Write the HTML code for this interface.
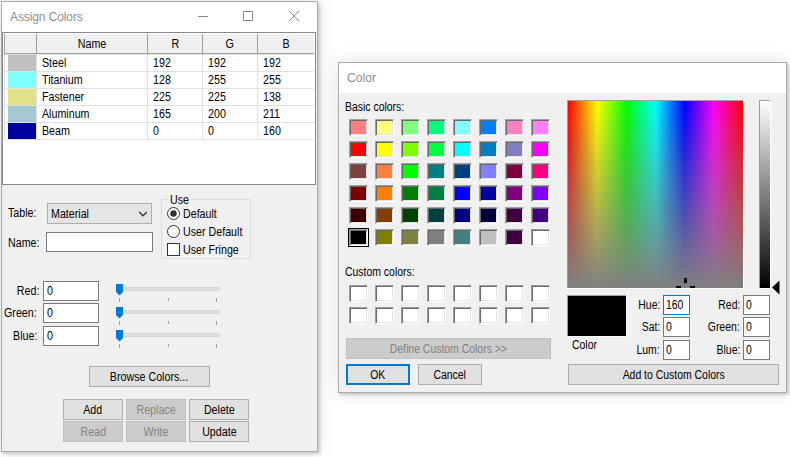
<!DOCTYPE html>
<html><head><meta charset="utf-8"><style>
html,body{margin:0;padding:0;}
body{width:790px;height:457px;overflow:hidden;position:relative;background:#ffffff;font-family:'Liberation Sans', sans-serif;}
body>div,body>span,body>svg{position:absolute;box-sizing:border-box;}
body>span{white-space:pre;}
</style></head><body>
<div style="left:1px;top:1px;width:317px;height:451px;box-shadow:2px 2px 3px rgba(0,0,0,0.18), 0 0 18px 0 rgba(0,0,0,0.12);background:#f0f0f0"></div>
<div style="left:338px;top:62px;width:449px;height:331px;box-shadow:2px 2px 3px rgba(0,0,0,0.18), 0 0 18px 0 rgba(0,0,0,0.12);background:#f0f0f0"></div>
<div style="left:1px;top:1px;width:317px;height:451px;border:1px solid #aaaaaa;background:#f0f0f0;"></div>
<div style="left:2px;top:2px;width:315px;height:30px;background:#ffffff"></div>
<span style="left:10px;top:11px;font-size:12px;line-height:12px;color:#8c8c8c;letter-spacing:-0.1px;transform:scaleX(1);transform-origin:0 0;">Assign Colors</span>
<svg style="left:0;top:0" width="790" height="457" viewBox="0 0 790 457"><g stroke="#8a8a8e" stroke-width="1" fill="none" shape-rendering="crispEdges"><line x1="198" y1="16.5" x2="208" y2="16.5"/><rect x="243.5" y="11.5" width="9" height="9"/></g><g stroke="#8a8a8e" stroke-width="1" fill="none"><line x1="289" y1="11" x2="299" y2="21"/><line x1="299" y1="11" x2="289" y2="21"/><line x1="766" y1="72" x2="776" y2="82"/><line x1="776" y1="72" x2="766" y2="82"/></g></svg>
<div style="left:2px;top:32px;width:314px;height:153px;border:1px solid #828790;background:#ffffff;"></div>
<div style="left:5px;top:34px;width:309px;height:19px;background:#f0f0f0"></div>
<div style="left:4px;top:34px;width:1px;height:20px;background:#a0a0a0"></div>
<div style="left:4px;top:53px;width:310px;height:1px;background:#a0a0a0"></div>
<div style="left:36px;top:34px;width:1px;height:19px;background:#a0a0a0"></div>
<div style="left:147px;top:34px;width:1px;height:19px;background:#a0a0a0"></div>
<div style="left:202px;top:34px;width:1px;height:19px;background:#a0a0a0"></div>
<div style="left:257px;top:34px;width:1px;height:19px;background:#a0a0a0"></div>
<div style="left:5px;top:54px;width:309px;height:1px;background:#e0e0e0"></div>
<div style="left:5px;top:71px;width:309px;height:1px;background:#e0e0e0"></div>
<div style="left:5px;top:88px;width:309px;height:1px;background:#e0e0e0"></div>
<div style="left:5px;top:105px;width:309px;height:1px;background:#e0e0e0"></div>
<div style="left:5px;top:122px;width:309px;height:1px;background:#e0e0e0"></div>
<div style="left:5px;top:139px;width:309px;height:1px;background:#e0e0e0"></div>
<div style="left:4px;top:54px;width:1px;height:86px;background:#e0e0e0"></div>
<div style="left:36px;top:54px;width:1px;height:86px;background:#e0e0e0"></div>
<div style="left:147px;top:54px;width:1px;height:86px;background:#e0e0e0"></div>
<div style="left:202px;top:54px;width:1px;height:86px;background:#e0e0e0"></div>
<div style="left:257px;top:54px;width:1px;height:86px;background:#e0e0e0"></div>
<div style="left:37px;width:110px;text-align:center;top:38px;font-size:12px;line-height:12px;white-space:pre"><span style="display:inline-block;color:#000;letter-spacing:0px;transform:scaleX(0.89);transform-origin:50% 0">Name</span></div>
<div style="left:148px;width:54px;text-align:center;top:38px;font-size:12px;line-height:12px;white-space:pre"><span style="display:inline-block;color:#000;letter-spacing:0px;transform:scaleX(0.89);transform-origin:50% 0">R</span></div>
<div style="left:203px;width:54px;text-align:center;top:38px;font-size:12px;line-height:12px;white-space:pre"><span style="display:inline-block;color:#000;letter-spacing:0px;transform:scaleX(0.89);transform-origin:50% 0">G</span></div>
<div style="left:258px;width:56px;text-align:center;top:38px;font-size:12px;line-height:12px;white-space:pre"><span style="display:inline-block;color:#000;letter-spacing:0px;transform:scaleX(0.89);transform-origin:50% 0">B</span></div>
<div style="left:8px;top:55px;width:28px;height:16px;background:#c0c0c0"></div>
<span style="left:42px;top:57px;font-size:12px;line-height:12px;color:#000;letter-spacing:0px;transform:scaleX(0.89);transform-origin:0 0;">Steel</span>
<span style="left:153px;top:57px;font-size:12px;line-height:12px;color:#000;letter-spacing:0px;transform:scaleX(0.89);transform-origin:0 0;">192</span>
<span style="left:208px;top:57px;font-size:12px;line-height:12px;color:#000;letter-spacing:0px;transform:scaleX(0.89);transform-origin:0 0;">192</span>
<span style="left:263px;top:57px;font-size:12px;line-height:12px;color:#000;letter-spacing:0px;transform:scaleX(0.89);transform-origin:0 0;">192</span>
<div style="left:8px;top:72px;width:28px;height:16px;background:#80ffff"></div>
<span style="left:42px;top:74px;font-size:12px;line-height:12px;color:#000;letter-spacing:0px;transform:scaleX(0.89);transform-origin:0 0;">Titanium</span>
<span style="left:153px;top:74px;font-size:12px;line-height:12px;color:#000;letter-spacing:0px;transform:scaleX(0.89);transform-origin:0 0;">128</span>
<span style="left:208px;top:74px;font-size:12px;line-height:12px;color:#000;letter-spacing:0px;transform:scaleX(0.89);transform-origin:0 0;">255</span>
<span style="left:263px;top:74px;font-size:12px;line-height:12px;color:#000;letter-spacing:0px;transform:scaleX(0.89);transform-origin:0 0;">255</span>
<div style="left:8px;top:89px;width:28px;height:16px;background:#e1e18a"></div>
<span style="left:42px;top:91px;font-size:12px;line-height:12px;color:#000;letter-spacing:0px;transform:scaleX(0.89);transform-origin:0 0;">Fastener</span>
<span style="left:153px;top:91px;font-size:12px;line-height:12px;color:#000;letter-spacing:0px;transform:scaleX(0.89);transform-origin:0 0;">225</span>
<span style="left:208px;top:91px;font-size:12px;line-height:12px;color:#000;letter-spacing:0px;transform:scaleX(0.89);transform-origin:0 0;">225</span>
<span style="left:263px;top:91px;font-size:12px;line-height:12px;color:#000;letter-spacing:0px;transform:scaleX(0.89);transform-origin:0 0;">138</span>
<div style="left:8px;top:106px;width:28px;height:16px;background:#a5c8d3"></div>
<span style="left:42px;top:108px;font-size:12px;line-height:12px;color:#000;letter-spacing:0px;transform:scaleX(0.89);transform-origin:0 0;">Aluminum</span>
<span style="left:153px;top:108px;font-size:12px;line-height:12px;color:#000;letter-spacing:0px;transform:scaleX(0.89);transform-origin:0 0;">165</span>
<span style="left:208px;top:108px;font-size:12px;line-height:12px;color:#000;letter-spacing:0px;transform:scaleX(0.89);transform-origin:0 0;">200</span>
<span style="left:263px;top:108px;font-size:12px;line-height:12px;color:#000;letter-spacing:0px;transform:scaleX(0.89);transform-origin:0 0;">211</span>
<div style="left:8px;top:123px;width:28px;height:16px;background:#0000a0"></div>
<span style="left:42px;top:125px;font-size:12px;line-height:12px;color:#000;letter-spacing:0px;transform:scaleX(0.89);transform-origin:0 0;">Beam</span>
<span style="left:153px;top:125px;font-size:12px;line-height:12px;color:#000;letter-spacing:0px;transform:scaleX(0.89);transform-origin:0 0;">0</span>
<span style="left:208px;top:125px;font-size:12px;line-height:12px;color:#000;letter-spacing:0px;transform:scaleX(0.89);transform-origin:0 0;">0</span>
<span style="left:263px;top:125px;font-size:12px;line-height:12px;color:#000;letter-spacing:0px;transform:scaleX(0.89);transform-origin:0 0;">160</span>
<span style="left:8px;top:207px;font-size:12px;line-height:12px;color:#000;letter-spacing:0px;transform:scaleX(0.89);transform-origin:0 0;">Table:</span>
<div style="left:47px;top:203px;width:105px;height:21px;border:1px solid #adadad;background:#e5e5e5;"></div>
<span style="left:51px;top:208px;font-size:12px;line-height:12px;color:#000;letter-spacing:0px;transform:scaleX(0.89);transform-origin:0 0;">Material</span>
<svg style="left:138px;top:210px" width="11" height="8" viewBox="0 0 11 8"><polyline points="1.2,2 5,5.8 8.8,2" fill="none" stroke="#333" stroke-width="1.3"/></svg>
<span style="left:8px;top:237px;font-size:12px;line-height:12px;color:#000;letter-spacing:0px;transform:scaleX(0.89);transform-origin:0 0;">Name:</span>
<div style="left:46px;top:232px;width:107px;height:20px;border:1px solid #7a7a7a;background:#ffffff;"></div>
<div style="left:161px;top:199px;width:90px;height:60px;border:1px solid #dcdcdc;"></div>
<div style="left:168px;top:196px;width:23px;height:6px;background:#f0f0f0"></div>
<span style="left:170px;top:194px;font-size:12px;line-height:12px;color:#000;letter-spacing:0px;transform:scaleX(0.89);transform-origin:0 0;">Use</span>
<svg style="left:166px;top:206px" width="15" height="52" viewBox="0 0 15 52"><circle cx="7.5" cy="7.5" r="6" fill="#fff" stroke="#333" stroke-width="1"/><circle cx="7.5" cy="7.5" r="3.2" fill="#333"/><circle cx="7.5" cy="25.5" r="6" fill="#fff" stroke="#333" stroke-width="1"/><rect x="1.5" y="37.5" width="12" height="12" fill="#fff" stroke="#333" stroke-width="1"/></svg>
<span style="left:183px;top:208px;font-size:12px;line-height:12px;color:#000;letter-spacing:0px;transform:scaleX(0.89);transform-origin:0 0;">Default</span>
<span style="left:183px;top:226px;font-size:12px;line-height:12px;color:#000;letter-spacing:0px;transform:scaleX(0.89);transform-origin:0 0;">User Default</span>
<span style="left:183px;top:244px;font-size:12px;line-height:12px;color:#000;letter-spacing:0px;transform:scaleX(0.89);transform-origin:0 0;">User Fringe</span>
<div style="left:0;width:39px;text-align:right;top:285px;font-size:12px;line-height:12px;white-space:pre"><span style="display:inline-block;color:#000;letter-spacing:0px;transform:scaleX(0.89);transform-origin:100% 0">Red:</span></div>
<div style="left:43px;top:281px;width:56px;height:20px;border:1px solid #7a7a7a;background:#ffffff;"></div>
<span style="left:47px;top:285px;font-size:12px;line-height:12px;color:#000;letter-spacing:0px;transform:scaleX(0.89);transform-origin:0 0;">0</span>
<div style="left:116px;top:287px;width:104px;height:4px;border:1px solid #d6d6d6;background:#dedede;"></div>
<div style="left:119px;top:298px;width:1px;height:4px;background:#a0a0a0"></div>
<div style="left:168px;top:298px;width:1px;height:3px;background:#a0a0a0"></div>
<div style="left:216px;top:298px;width:1px;height:4px;background:#a0a0a0"></div>
<svg style="left:116px;top:284px" width="7" height="12" viewBox="0 0 7 12"><polygon points="0,0 7,0 7,8 3.5,11.5 0,8" fill="#0078d7"/></svg>
<div style="left:0;width:37px;text-align:right;top:307px;font-size:12px;line-height:12px;white-space:pre"><span style="display:inline-block;color:#000;letter-spacing:0px;transform:scaleX(0.89);transform-origin:100% 0">Green:</span></div>
<div style="left:43px;top:303px;width:56px;height:20px;border:1px solid #7a7a7a;background:#ffffff;"></div>
<span style="left:47px;top:307px;font-size:12px;line-height:12px;color:#000;letter-spacing:0px;transform:scaleX(0.89);transform-origin:0 0;">0</span>
<div style="left:116px;top:310px;width:104px;height:4px;border:1px solid #d6d6d6;background:#dedede;"></div>
<div style="left:119px;top:321px;width:1px;height:4px;background:#a0a0a0"></div>
<div style="left:168px;top:321px;width:1px;height:3px;background:#a0a0a0"></div>
<div style="left:216px;top:321px;width:1px;height:4px;background:#a0a0a0"></div>
<svg style="left:116px;top:307px" width="7" height="12" viewBox="0 0 7 12"><polygon points="0,0 7,0 7,8 3.5,11.5 0,8" fill="#0078d7"/></svg>
<div style="left:0;width:37px;text-align:right;top:330px;font-size:12px;line-height:12px;white-space:pre"><span style="display:inline-block;color:#000;letter-spacing:0px;transform:scaleX(0.89);transform-origin:100% 0">Blue:</span></div>
<div style="left:43px;top:326px;width:56px;height:20px;border:1px solid #7a7a7a;background:#ffffff;"></div>
<span style="left:47px;top:330px;font-size:12px;line-height:12px;color:#000;letter-spacing:0px;transform:scaleX(0.89);transform-origin:0 0;">0</span>
<div style="left:116px;top:333px;width:104px;height:4px;border:1px solid #d6d6d6;background:#dedede;"></div>
<div style="left:119px;top:344px;width:1px;height:4px;background:#a0a0a0"></div>
<div style="left:168px;top:344px;width:1px;height:3px;background:#a0a0a0"></div>
<div style="left:216px;top:344px;width:1px;height:4px;background:#a0a0a0"></div>
<svg style="left:116px;top:330px" width="7" height="12" viewBox="0 0 7 12"><polygon points="0,0 7,0 7,8 3.5,11.5 0,8" fill="#0078d7"/></svg>
<div style="left:89px;top:366px;width:121px;height:21px;border:1px solid #adadad;background:#e1e1e1;"></div>
<div style="left:89px;width:121px;text-align:center;top:371px;font-size:12px;line-height:12px;white-space:pre"><span style="display:inline-block;color:#000;letter-spacing:0px;transform:scaleX(0.89);transform-origin:50% 0">Browse Colors...</span></div>
<div style="left:63px;top:399px;width:60px;height:21px;border:1px solid #adadad;background:#e1e1e1;"></div>
<div style="left:63px;width:60px;text-align:center;top:404px;font-size:12px;line-height:12px;white-space:pre"><span style="display:inline-block;color:#000;letter-spacing:0px;transform:scaleX(0.89);transform-origin:50% 0">Add</span></div>
<div style="left:126px;top:399px;width:60px;height:21px;border:1px solid #bfbfbf;background:#cccccc;"></div>
<div style="left:126px;width:60px;text-align:center;top:404px;font-size:12px;line-height:12px;white-space:pre"><span style="display:inline-block;color:#838383;letter-spacing:0px;transform:scaleX(0.89);transform-origin:50% 0">Replace</span></div>
<div style="left:189px;top:399px;width:60px;height:21px;border:1px solid #adadad;background:#e1e1e1;"></div>
<div style="left:189px;width:60px;text-align:center;top:404px;font-size:12px;line-height:12px;white-space:pre"><span style="display:inline-block;color:#000;letter-spacing:0px;transform:scaleX(0.89);transform-origin:50% 0">Delete</span></div>
<div style="left:63px;top:421px;width:60px;height:21px;border:1px solid #bfbfbf;background:#cccccc;"></div>
<div style="left:63px;width:60px;text-align:center;top:426px;font-size:12px;line-height:12px;white-space:pre"><span style="display:inline-block;color:#838383;letter-spacing:0px;transform:scaleX(0.89);transform-origin:50% 0">Read</span></div>
<div style="left:126px;top:421px;width:60px;height:21px;border:1px solid #bfbfbf;background:#cccccc;"></div>
<div style="left:126px;width:60px;text-align:center;top:426px;font-size:12px;line-height:12px;white-space:pre"><span style="display:inline-block;color:#838383;letter-spacing:0px;transform:scaleX(0.89);transform-origin:50% 0">Write</span></div>
<div style="left:189px;top:421px;width:60px;height:21px;border:1px solid #adadad;background:#e1e1e1;"></div>
<div style="left:189px;width:60px;text-align:center;top:426px;font-size:12px;line-height:12px;white-space:pre"><span style="display:inline-block;color:#000;letter-spacing:0px;transform:scaleX(0.89);transform-origin:50% 0">Update</span></div>
<div style="left:338px;top:62px;width:449px;height:331px;border:1px solid #aaaaaa;background:#f0f0f0;"></div>
<div style="left:339px;top:63px;width:447px;height:30px;background:#ffffff"></div>
<span style="left:347px;top:72px;font-size:12px;line-height:12px;color:#8c8c8c;letter-spacing:0.1px;transform:scaleX(1);transform-origin:0 0;">Color</span>
<span style="left:345px;top:101px;font-size:12px;line-height:12px;color:#000;letter-spacing:0px;transform:scaleX(0.87);transform-origin:0 0;">Basic colors:</span>
<div style="left:349px;top:119px;width:19px;height:17px;background:#FF8080;border-style:solid;border-width:1px;border-color:#a0a0a0 #ffffff #ffffff #a0a0a0;box-shadow:inset 1px 1px 0 #696969, inset -1px -1px 0 #e3e3e3"></div>
<div style="left:375px;top:119px;width:19px;height:17px;background:#FFFF80;border-style:solid;border-width:1px;border-color:#a0a0a0 #ffffff #ffffff #a0a0a0;box-shadow:inset 1px 1px 0 #696969, inset -1px -1px 0 #e3e3e3"></div>
<div style="left:401px;top:119px;width:19px;height:17px;background:#80FF80;border-style:solid;border-width:1px;border-color:#a0a0a0 #ffffff #ffffff #a0a0a0;box-shadow:inset 1px 1px 0 #696969, inset -1px -1px 0 #e3e3e3"></div>
<div style="left:427px;top:119px;width:19px;height:17px;background:#00FF80;border-style:solid;border-width:1px;border-color:#a0a0a0 #ffffff #ffffff #a0a0a0;box-shadow:inset 1px 1px 0 #696969, inset -1px -1px 0 #e3e3e3"></div>
<div style="left:453px;top:119px;width:19px;height:17px;background:#80FFFF;border-style:solid;border-width:1px;border-color:#a0a0a0 #ffffff #ffffff #a0a0a0;box-shadow:inset 1px 1px 0 #696969, inset -1px -1px 0 #e3e3e3"></div>
<div style="left:479px;top:119px;width:19px;height:17px;background:#0080FF;border-style:solid;border-width:1px;border-color:#a0a0a0 #ffffff #ffffff #a0a0a0;box-shadow:inset 1px 1px 0 #696969, inset -1px -1px 0 #e3e3e3"></div>
<div style="left:505px;top:119px;width:19px;height:17px;background:#FF80C0;border-style:solid;border-width:1px;border-color:#a0a0a0 #ffffff #ffffff #a0a0a0;box-shadow:inset 1px 1px 0 #696969, inset -1px -1px 0 #e3e3e3"></div>
<div style="left:531px;top:119px;width:19px;height:17px;background:#FF80FF;border-style:solid;border-width:1px;border-color:#a0a0a0 #ffffff #ffffff #a0a0a0;box-shadow:inset 1px 1px 0 #696969, inset -1px -1px 0 #e3e3e3"></div>
<div style="left:349px;top:141px;width:19px;height:17px;background:#FF0000;border-style:solid;border-width:1px;border-color:#a0a0a0 #ffffff #ffffff #a0a0a0;box-shadow:inset 1px 1px 0 #696969, inset -1px -1px 0 #e3e3e3"></div>
<div style="left:375px;top:141px;width:19px;height:17px;background:#FFFF00;border-style:solid;border-width:1px;border-color:#a0a0a0 #ffffff #ffffff #a0a0a0;box-shadow:inset 1px 1px 0 #696969, inset -1px -1px 0 #e3e3e3"></div>
<div style="left:401px;top:141px;width:19px;height:17px;background:#80FF00;border-style:solid;border-width:1px;border-color:#a0a0a0 #ffffff #ffffff #a0a0a0;box-shadow:inset 1px 1px 0 #696969, inset -1px -1px 0 #e3e3e3"></div>
<div style="left:427px;top:141px;width:19px;height:17px;background:#00FF40;border-style:solid;border-width:1px;border-color:#a0a0a0 #ffffff #ffffff #a0a0a0;box-shadow:inset 1px 1px 0 #696969, inset -1px -1px 0 #e3e3e3"></div>
<div style="left:453px;top:141px;width:19px;height:17px;background:#00FFFF;border-style:solid;border-width:1px;border-color:#a0a0a0 #ffffff #ffffff #a0a0a0;box-shadow:inset 1px 1px 0 #696969, inset -1px -1px 0 #e3e3e3"></div>
<div style="left:479px;top:141px;width:19px;height:17px;background:#0080C0;border-style:solid;border-width:1px;border-color:#a0a0a0 #ffffff #ffffff #a0a0a0;box-shadow:inset 1px 1px 0 #696969, inset -1px -1px 0 #e3e3e3"></div>
<div style="left:505px;top:141px;width:19px;height:17px;background:#8080C0;border-style:solid;border-width:1px;border-color:#a0a0a0 #ffffff #ffffff #a0a0a0;box-shadow:inset 1px 1px 0 #696969, inset -1px -1px 0 #e3e3e3"></div>
<div style="left:531px;top:141px;width:19px;height:17px;background:#FF00FF;border-style:solid;border-width:1px;border-color:#a0a0a0 #ffffff #ffffff #a0a0a0;box-shadow:inset 1px 1px 0 #696969, inset -1px -1px 0 #e3e3e3"></div>
<div style="left:349px;top:163px;width:19px;height:17px;background:#804040;border-style:solid;border-width:1px;border-color:#a0a0a0 #ffffff #ffffff #a0a0a0;box-shadow:inset 1px 1px 0 #696969, inset -1px -1px 0 #e3e3e3"></div>
<div style="left:375px;top:163px;width:19px;height:17px;background:#FF8040;border-style:solid;border-width:1px;border-color:#a0a0a0 #ffffff #ffffff #a0a0a0;box-shadow:inset 1px 1px 0 #696969, inset -1px -1px 0 #e3e3e3"></div>
<div style="left:401px;top:163px;width:19px;height:17px;background:#00FF00;border-style:solid;border-width:1px;border-color:#a0a0a0 #ffffff #ffffff #a0a0a0;box-shadow:inset 1px 1px 0 #696969, inset -1px -1px 0 #e3e3e3"></div>
<div style="left:427px;top:163px;width:19px;height:17px;background:#008080;border-style:solid;border-width:1px;border-color:#a0a0a0 #ffffff #ffffff #a0a0a0;box-shadow:inset 1px 1px 0 #696969, inset -1px -1px 0 #e3e3e3"></div>
<div style="left:453px;top:163px;width:19px;height:17px;background:#004080;border-style:solid;border-width:1px;border-color:#a0a0a0 #ffffff #ffffff #a0a0a0;box-shadow:inset 1px 1px 0 #696969, inset -1px -1px 0 #e3e3e3"></div>
<div style="left:479px;top:163px;width:19px;height:17px;background:#8080FF;border-style:solid;border-width:1px;border-color:#a0a0a0 #ffffff #ffffff #a0a0a0;box-shadow:inset 1px 1px 0 #696969, inset -1px -1px 0 #e3e3e3"></div>
<div style="left:505px;top:163px;width:19px;height:17px;background:#800040;border-style:solid;border-width:1px;border-color:#a0a0a0 #ffffff #ffffff #a0a0a0;box-shadow:inset 1px 1px 0 #696969, inset -1px -1px 0 #e3e3e3"></div>
<div style="left:531px;top:163px;width:19px;height:17px;background:#FF0080;border-style:solid;border-width:1px;border-color:#a0a0a0 #ffffff #ffffff #a0a0a0;box-shadow:inset 1px 1px 0 #696969, inset -1px -1px 0 #e3e3e3"></div>
<div style="left:349px;top:185px;width:19px;height:17px;background:#800000;border-style:solid;border-width:1px;border-color:#a0a0a0 #ffffff #ffffff #a0a0a0;box-shadow:inset 1px 1px 0 #696969, inset -1px -1px 0 #e3e3e3"></div>
<div style="left:375px;top:185px;width:19px;height:17px;background:#FF8000;border-style:solid;border-width:1px;border-color:#a0a0a0 #ffffff #ffffff #a0a0a0;box-shadow:inset 1px 1px 0 #696969, inset -1px -1px 0 #e3e3e3"></div>
<div style="left:401px;top:185px;width:19px;height:17px;background:#008000;border-style:solid;border-width:1px;border-color:#a0a0a0 #ffffff #ffffff #a0a0a0;box-shadow:inset 1px 1px 0 #696969, inset -1px -1px 0 #e3e3e3"></div>
<div style="left:427px;top:185px;width:19px;height:17px;background:#008040;border-style:solid;border-width:1px;border-color:#a0a0a0 #ffffff #ffffff #a0a0a0;box-shadow:inset 1px 1px 0 #696969, inset -1px -1px 0 #e3e3e3"></div>
<div style="left:453px;top:185px;width:19px;height:17px;background:#0000FF;border-style:solid;border-width:1px;border-color:#a0a0a0 #ffffff #ffffff #a0a0a0;box-shadow:inset 1px 1px 0 #696969, inset -1px -1px 0 #e3e3e3"></div>
<div style="left:479px;top:185px;width:19px;height:17px;background:#0000A0;border-style:solid;border-width:1px;border-color:#a0a0a0 #ffffff #ffffff #a0a0a0;box-shadow:inset 1px 1px 0 #696969, inset -1px -1px 0 #e3e3e3"></div>
<div style="left:505px;top:185px;width:19px;height:17px;background:#800080;border-style:solid;border-width:1px;border-color:#a0a0a0 #ffffff #ffffff #a0a0a0;box-shadow:inset 1px 1px 0 #696969, inset -1px -1px 0 #e3e3e3"></div>
<div style="left:531px;top:185px;width:19px;height:17px;background:#8000FF;border-style:solid;border-width:1px;border-color:#a0a0a0 #ffffff #ffffff #a0a0a0;box-shadow:inset 1px 1px 0 #696969, inset -1px -1px 0 #e3e3e3"></div>
<div style="left:349px;top:207px;width:19px;height:17px;background:#400000;border-style:solid;border-width:1px;border-color:#a0a0a0 #ffffff #ffffff #a0a0a0;box-shadow:inset 1px 1px 0 #696969, inset -1px -1px 0 #e3e3e3"></div>
<div style="left:375px;top:207px;width:19px;height:17px;background:#804000;border-style:solid;border-width:1px;border-color:#a0a0a0 #ffffff #ffffff #a0a0a0;box-shadow:inset 1px 1px 0 #696969, inset -1px -1px 0 #e3e3e3"></div>
<div style="left:401px;top:207px;width:19px;height:17px;background:#004000;border-style:solid;border-width:1px;border-color:#a0a0a0 #ffffff #ffffff #a0a0a0;box-shadow:inset 1px 1px 0 #696969, inset -1px -1px 0 #e3e3e3"></div>
<div style="left:427px;top:207px;width:19px;height:17px;background:#004040;border-style:solid;border-width:1px;border-color:#a0a0a0 #ffffff #ffffff #a0a0a0;box-shadow:inset 1px 1px 0 #696969, inset -1px -1px 0 #e3e3e3"></div>
<div style="left:453px;top:207px;width:19px;height:17px;background:#000080;border-style:solid;border-width:1px;border-color:#a0a0a0 #ffffff #ffffff #a0a0a0;box-shadow:inset 1px 1px 0 #696969, inset -1px -1px 0 #e3e3e3"></div>
<div style="left:479px;top:207px;width:19px;height:17px;background:#000040;border-style:solid;border-width:1px;border-color:#a0a0a0 #ffffff #ffffff #a0a0a0;box-shadow:inset 1px 1px 0 #696969, inset -1px -1px 0 #e3e3e3"></div>
<div style="left:505px;top:207px;width:19px;height:17px;background:#400040;border-style:solid;border-width:1px;border-color:#a0a0a0 #ffffff #ffffff #a0a0a0;box-shadow:inset 1px 1px 0 #696969, inset -1px -1px 0 #e3e3e3"></div>
<div style="left:531px;top:207px;width:19px;height:17px;background:#400080;border-style:solid;border-width:1px;border-color:#a0a0a0 #ffffff #ffffff #a0a0a0;box-shadow:inset 1px 1px 0 #696969, inset -1px -1px 0 #e3e3e3"></div>
<div style="left:349px;top:229px;width:19px;height:17px;background:#000000;border-style:solid;border-width:1px;border-color:#a0a0a0 #ffffff #ffffff #a0a0a0;box-shadow:inset 1px 1px 0 #696969, inset -1px -1px 0 #e3e3e3"></div>
<div style="left:375px;top:229px;width:19px;height:17px;background:#808000;border-style:solid;border-width:1px;border-color:#a0a0a0 #ffffff #ffffff #a0a0a0;box-shadow:inset 1px 1px 0 #696969, inset -1px -1px 0 #e3e3e3"></div>
<div style="left:401px;top:229px;width:19px;height:17px;background:#808040;border-style:solid;border-width:1px;border-color:#a0a0a0 #ffffff #ffffff #a0a0a0;box-shadow:inset 1px 1px 0 #696969, inset -1px -1px 0 #e3e3e3"></div>
<div style="left:427px;top:229px;width:19px;height:17px;background:#808080;border-style:solid;border-width:1px;border-color:#a0a0a0 #ffffff #ffffff #a0a0a0;box-shadow:inset 1px 1px 0 #696969, inset -1px -1px 0 #e3e3e3"></div>
<div style="left:453px;top:229px;width:19px;height:17px;background:#408080;border-style:solid;border-width:1px;border-color:#a0a0a0 #ffffff #ffffff #a0a0a0;box-shadow:inset 1px 1px 0 #696969, inset -1px -1px 0 #e3e3e3"></div>
<div style="left:479px;top:229px;width:19px;height:17px;background:#C0C0C0;border-style:solid;border-width:1px;border-color:#a0a0a0 #ffffff #ffffff #a0a0a0;box-shadow:inset 1px 1px 0 #696969, inset -1px -1px 0 #e3e3e3"></div>
<div style="left:505px;top:229px;width:19px;height:17px;background:#400040;border-style:solid;border-width:1px;border-color:#a0a0a0 #ffffff #ffffff #a0a0a0;box-shadow:inset 1px 1px 0 #696969, inset -1px -1px 0 #e3e3e3"></div>
<div style="left:531px;top:229px;width:19px;height:17px;background:#FFFFFF;border-style:solid;border-width:1px;border-color:#a0a0a0 #ffffff #ffffff #a0a0a0;box-shadow:inset 1px 1px 0 #696969, inset -1px -1px 0 #e3e3e3"></div>
<div style="left:348px;top:228px;width:21px;height:19px;border:1px solid #000000;"></div>
<span style="left:345px;top:266px;font-size:12px;line-height:12px;color:#000;letter-spacing:0px;transform:scaleX(0.87);transform-origin:0 0;">Custom colors:</span>
<div style="left:349px;top:285px;width:19px;height:17px;background:#ffffff;border-style:solid;border-width:1px;border-color:#a0a0a0 #ffffff #ffffff #a0a0a0;box-shadow:inset 1px 1px 0 #696969, inset -1px -1px 0 #e3e3e3"></div>
<div style="left:375px;top:285px;width:19px;height:17px;background:#ffffff;border-style:solid;border-width:1px;border-color:#a0a0a0 #ffffff #ffffff #a0a0a0;box-shadow:inset 1px 1px 0 #696969, inset -1px -1px 0 #e3e3e3"></div>
<div style="left:401px;top:285px;width:19px;height:17px;background:#ffffff;border-style:solid;border-width:1px;border-color:#a0a0a0 #ffffff #ffffff #a0a0a0;box-shadow:inset 1px 1px 0 #696969, inset -1px -1px 0 #e3e3e3"></div>
<div style="left:427px;top:285px;width:19px;height:17px;background:#ffffff;border-style:solid;border-width:1px;border-color:#a0a0a0 #ffffff #ffffff #a0a0a0;box-shadow:inset 1px 1px 0 #696969, inset -1px -1px 0 #e3e3e3"></div>
<div style="left:453px;top:285px;width:19px;height:17px;background:#ffffff;border-style:solid;border-width:1px;border-color:#a0a0a0 #ffffff #ffffff #a0a0a0;box-shadow:inset 1px 1px 0 #696969, inset -1px -1px 0 #e3e3e3"></div>
<div style="left:479px;top:285px;width:19px;height:17px;background:#ffffff;border-style:solid;border-width:1px;border-color:#a0a0a0 #ffffff #ffffff #a0a0a0;box-shadow:inset 1px 1px 0 #696969, inset -1px -1px 0 #e3e3e3"></div>
<div style="left:505px;top:285px;width:19px;height:17px;background:#ffffff;border-style:solid;border-width:1px;border-color:#a0a0a0 #ffffff #ffffff #a0a0a0;box-shadow:inset 1px 1px 0 #696969, inset -1px -1px 0 #e3e3e3"></div>
<div style="left:531px;top:285px;width:19px;height:17px;background:#ffffff;border-style:solid;border-width:1px;border-color:#a0a0a0 #ffffff #ffffff #a0a0a0;box-shadow:inset 1px 1px 0 #696969, inset -1px -1px 0 #e3e3e3"></div>
<div style="left:349px;top:307px;width:19px;height:17px;background:#ffffff;border-style:solid;border-width:1px;border-color:#a0a0a0 #ffffff #ffffff #a0a0a0;box-shadow:inset 1px 1px 0 #696969, inset -1px -1px 0 #e3e3e3"></div>
<div style="left:375px;top:307px;width:19px;height:17px;background:#ffffff;border-style:solid;border-width:1px;border-color:#a0a0a0 #ffffff #ffffff #a0a0a0;box-shadow:inset 1px 1px 0 #696969, inset -1px -1px 0 #e3e3e3"></div>
<div style="left:401px;top:307px;width:19px;height:17px;background:#ffffff;border-style:solid;border-width:1px;border-color:#a0a0a0 #ffffff #ffffff #a0a0a0;box-shadow:inset 1px 1px 0 #696969, inset -1px -1px 0 #e3e3e3"></div>
<div style="left:427px;top:307px;width:19px;height:17px;background:#ffffff;border-style:solid;border-width:1px;border-color:#a0a0a0 #ffffff #ffffff #a0a0a0;box-shadow:inset 1px 1px 0 #696969, inset -1px -1px 0 #e3e3e3"></div>
<div style="left:453px;top:307px;width:19px;height:17px;background:#ffffff;border-style:solid;border-width:1px;border-color:#a0a0a0 #ffffff #ffffff #a0a0a0;box-shadow:inset 1px 1px 0 #696969, inset -1px -1px 0 #e3e3e3"></div>
<div style="left:479px;top:307px;width:19px;height:17px;background:#ffffff;border-style:solid;border-width:1px;border-color:#a0a0a0 #ffffff #ffffff #a0a0a0;box-shadow:inset 1px 1px 0 #696969, inset -1px -1px 0 #e3e3e3"></div>
<div style="left:505px;top:307px;width:19px;height:17px;background:#ffffff;border-style:solid;border-width:1px;border-color:#a0a0a0 #ffffff #ffffff #a0a0a0;box-shadow:inset 1px 1px 0 #696969, inset -1px -1px 0 #e3e3e3"></div>
<div style="left:531px;top:307px;width:19px;height:17px;background:#ffffff;border-style:solid;border-width:1px;border-color:#a0a0a0 #ffffff #ffffff #a0a0a0;box-shadow:inset 1px 1px 0 #696969, inset -1px -1px 0 #e3e3e3"></div>
<div style="left:346px;top:338px;width:205px;height:21px;border:1px solid #bfbfbf;background:#cccccc;"></div>
<div style="left:346px;width:205px;text-align:center;top:343px;font-size:12px;line-height:12px;white-space:pre"><span style="display:inline-block;color:#808080;letter-spacing:0px;transform:scaleX(0.87);transform-origin:50% 0">Define Custom Colors &gt;&gt;</span></div>
<div style="left:346px;top:364px;width:64px;height:21px;border:2px solid #0078d7;background:#e1e1e1"></div>
<div style="left:346px;width:64px;text-align:center;top:369px;font-size:12px;line-height:12px;white-space:pre"><span style="display:inline-block;color:#000;letter-spacing:0px;transform:scaleX(0.87);transform-origin:50% 0">OK</span></div>
<div style="left:418px;top:364px;width:64px;height:21px;border:1px solid #adadad;background:#e1e1e1;"></div>
<div style="left:418px;width:64px;text-align:center;top:369px;font-size:12px;line-height:12px;white-space:pre"><span style="display:inline-block;color:#000;letter-spacing:0px;transform:scaleX(0.87);transform-origin:50% 0">Cancel</span></div>
<div style="left:567px;top:100px;width:177px;height:189px;background:#ffffff"></div>
<div style="left:567px;top:100px;width:176px;height:1px;background:#a0a0a0"></div>
<div style="left:567px;top:100px;width:1px;height:188px;background:#a0a0a0"></div>
<div style="left:568px;top:101px;width:175px;height:187px;background:linear-gradient(to bottom, rgba(128,128,128,0) 0%, rgba(128,128,128,1) 100%), linear-gradient(to right,#ff0000 0%,#ffff00 16.67%,#00ff00 33.33%,#00ffff 50%,#0000ff 66.67%,#ff00ff 83.33%,#ff0000 100%)"></div>
<div style="left:684px;top:278px;width:3px;height:5px;background:#000"></div>
<div style="left:676px;top:286px;width:5px;height:2px;background:#000"></div>
<div style="left:690px;top:286px;width:5px;height:2px;background:#000"></div>
<div style="left:759px;top:100px;width:12px;height:189px;background:#ffffff"></div>
<div style="left:759px;top:100px;width:11px;height:1px;background:#a0a0a0"></div>
<div style="left:759px;top:100px;width:1px;height:188px;background:#a0a0a0"></div>
<div style="left:760px;top:101px;width:10px;height:187px;background:linear-gradient(to bottom,#ffffff,#000000)"></div>
<svg style="left:770px;top:279px" width="12" height="17" viewBox="0 0 12 17"><polygon points="2,8.5 9.5,1.5 9.5,15.5" fill="#000"/></svg>
<div style="left:567px;top:295px;width:60px;height:42px;background:#ffffff"></div>
<div style="left:567px;top:295px;width:59px;height:1px;background:#a0a0a0"></div>
<div style="left:567px;top:295px;width:1px;height:41px;background:#a0a0a0"></div>
<div style="left:568px;top:296px;width:58px;height:40px;background:#000000"></div>
<span style="left:572px;top:339px;font-size:12px;line-height:12px;color:#000;letter-spacing:0px;transform:scaleX(0.87);transform-origin:0 0;">Color</span>
<div style="left:0;width:660px;text-align:right;top:299px;font-size:12px;line-height:12px;white-space:pre"><span style="display:inline-block;color:#000;letter-spacing:0px;transform:scaleX(0.87);transform-origin:100% 0">Hue:</span></div>
<div style="left:663px;top:295px;width:27px;height:20px;border:1px solid #0078d7;background:#ffffff;"></div>
<span style="left:666px;top:299px;font-size:12px;line-height:12px;color:#000;letter-spacing:0px;transform:scaleX(0.87);transform-origin:0 0;">160</span>
<div style="left:0;width:740px;text-align:right;top:299px;font-size:12px;line-height:12px;white-space:pre"><span style="display:inline-block;color:#000;letter-spacing:0px;transform:scaleX(0.87);transform-origin:100% 0">Red:</span></div>
<div style="left:743px;top:295px;width:27px;height:20px;border:1px solid #7a7a7a;background:#ffffff;"></div>
<span style="left:746px;top:299px;font-size:12px;line-height:12px;color:#000;letter-spacing:0px;transform:scaleX(0.87);transform-origin:0 0;">0</span>
<div style="left:0;width:660px;text-align:right;top:321px;font-size:12px;line-height:12px;white-space:pre"><span style="display:inline-block;color:#000;letter-spacing:0px;transform:scaleX(0.87);transform-origin:100% 0">Sat:</span></div>
<div style="left:663px;top:317px;width:27px;height:20px;border:1px solid #7a7a7a;background:#ffffff;"></div>
<span style="left:666px;top:321px;font-size:12px;line-height:12px;color:#000;letter-spacing:0px;transform:scaleX(0.87);transform-origin:0 0;">0</span>
<div style="left:0;width:740px;text-align:right;top:321px;font-size:12px;line-height:12px;white-space:pre"><span style="display:inline-block;color:#000;letter-spacing:0px;transform:scaleX(0.87);transform-origin:100% 0">Green:</span></div>
<div style="left:743px;top:317px;width:27px;height:20px;border:1px solid #7a7a7a;background:#ffffff;"></div>
<span style="left:746px;top:321px;font-size:12px;line-height:12px;color:#000;letter-spacing:0px;transform:scaleX(0.87);transform-origin:0 0;">0</span>
<div style="left:0;width:660px;text-align:right;top:344px;font-size:12px;line-height:12px;white-space:pre"><span style="display:inline-block;color:#000;letter-spacing:0px;transform:scaleX(0.87);transform-origin:100% 0">Lum:</span></div>
<div style="left:663px;top:340px;width:27px;height:20px;border:1px solid #7a7a7a;background:#ffffff;"></div>
<span style="left:666px;top:344px;font-size:12px;line-height:12px;color:#000;letter-spacing:0px;transform:scaleX(0.87);transform-origin:0 0;">0</span>
<div style="left:0;width:740px;text-align:right;top:344px;font-size:12px;line-height:12px;white-space:pre"><span style="display:inline-block;color:#000;letter-spacing:0px;transform:scaleX(0.87);transform-origin:100% 0">Blue:</span></div>
<div style="left:743px;top:340px;width:27px;height:20px;border:1px solid #7a7a7a;background:#ffffff;"></div>
<span style="left:746px;top:344px;font-size:12px;line-height:12px;color:#000;letter-spacing:0px;transform:scaleX(0.87);transform-origin:0 0;">0</span>
<div style="left:568px;top:364px;width:211px;height:21px;border:1px solid #adadad;background:#e1e1e1;"></div>
<div style="left:568px;width:211px;text-align:center;top:369px;font-size:12px;line-height:12px;white-space:pre"><span style="display:inline-block;color:#000;letter-spacing:0px;transform:scaleX(0.87);transform-origin:50% 0">Add to Custom Colors</span></div>
</body></html>
